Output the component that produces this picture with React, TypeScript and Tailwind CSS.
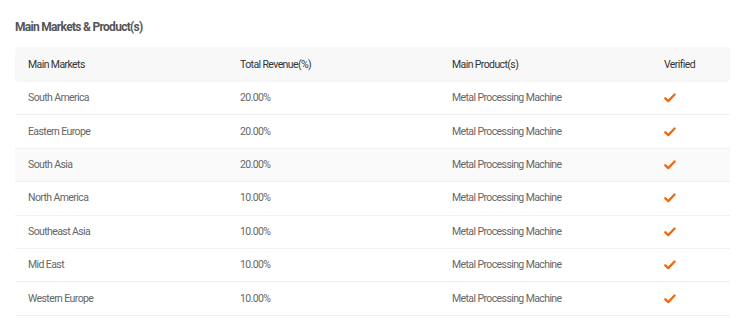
import React from "react";

const rows = [
  { market: "South America", revenue: "20.00%", product: "Metal Processing Machine" },
  { market: "Eastern Europe", revenue: "20.00%", product: "Metal Processing Machine" },
  { market: "South Asia", revenue: "20.00%", product: "Metal Processing Machine", hover: true },
  { market: "North America", revenue: "10.00%", product: "Metal Processing Machine" },
  { market: "Southeast Asia", revenue: "10.00%", product: "Metal Processing Machine" },
  { market: "Mid East", revenue: "10.00%", product: "Metal Processing Machine" },
  { market: "Western Europe", revenue: "10.00%", product: "Metal Processing Machine" },
];

const Check = () => (
  <svg width="12" height="10" viewBox="0 0 12 10" className="block">
    <path d="M1.3 5.3 L4.3 8.1 L10.6 1.5" fill="none" stroke="#f0690f" strokeWidth="2.3" strokeLinecap="round" strokeLinejoin="round" />
  </svg>
);

export default function App() {
  return (
    <div className="w-[750px] h-[335px] bg-white overflow-hidden font-['Roboto','Liberation_Sans',sans-serif]">
      <div className="pl-[15px] pr-[20px] pt-[20px]">
        <h2 className="text-[12px] leading-[15px] font-bold text-[#555555] tracking-[-0.7px]">Main Markets &amp; Product(s)</h2>

        <div className="mt-[12px] w-[715px]">
          {/* header */}
          <div className="flex items-center h-[35px] bg-[#f8f8f8] rounded-[4px] text-[10.5px] text-[#333333] tracking-[-0.6px]">
            <div className="w-[212px] pl-[13px]">Main Markets</div>
            <div className="w-[212px] pl-[13px]">Total Revenue(%)</div>
            <div className="w-[212px] pl-[13px]">Main Product(s)</div>
            <div className="flex-1 pl-[13px]">Verified</div>
          </div>

          {rows.map((r) => (
            <div
              key={r.market}
              className={`flex items-center h-[33.4px] border-b border-[#f0f0f0] text-[10.5px] text-[#666666] tracking-[-0.6px] ${r.hover ? "bg-[#fafafa]" : ""}`}
            >
              <div className="w-[212px] pl-[13px]">{r.market}</div>
              <div className="w-[212px] pl-[13px]">{r.revenue}</div>
              <div className="w-[212px] pl-[13px]">{r.product}</div>
              <div className="flex-1 pl-[13px]">
                <Check />
              </div>
            </div>
          ))}
        </div>
      </div>
    </div>
  );
}
